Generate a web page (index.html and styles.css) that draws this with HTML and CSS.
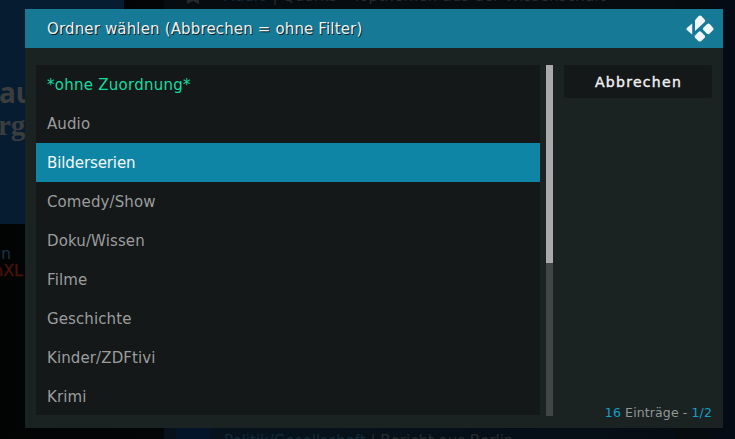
FILE: index.html
```html
<!DOCTYPE html>
<html lang="de">
<head>
<meta charset="utf-8">
<title>Ordner wählen</title>
<link rel="stylesheet" href="styles.css">
</head>
<body>
<div class="backdrop">
  <div class="poster"><div class="poster-sans">au</div><div class="poster-serif">rg</div></div>
  <div class="caption"><div class="caption-top">n</div><div class="caption-bottom">nXL</div></div>
  <div class="strip strip-top">
    <svg class="bookmark" width="14" height="12" viewBox="0 0 14 12"><path d="M1 0h12v12l-6-3-6 3z" fill="#25292b"/></svg>
    <div class="entry entry-top"><span class="topic">Audio</span> | Quarks - Topthemen aus der Wissenschaft</div>
  </div>
  <div class="strip strip-bottom">
    <div class="entry entry-bottom"><span class="topic">Politik/Gesellschaft</span> | Bericht aus Berlin</div>
  </div>
</div>
<main class="dialog">
  <header class="titlebar">
    <h1>Ordner wählen (Abbrechen = ohne Filter)</h1>
    <svg class="logo" width="28" height="28" viewBox="0 0 28 28" fill="#f0f6fa">
      <path d="M9 5.3 12.6 1.1Q14 .1 15.4 1.1L19 4.9Q19.6 6 18.7 7L9 15.9z"/>
      <path d="M6.2 8.6v10.8L.8 14.9Q0 14 .8 13z"/>
      <path d="m17.3 12.8 3.8-3.8q1.4-.8 2.6 0l3.5 3.9q.8 1.1 0 2.2l-3.8 3.7q-1.2.8-2.4 0l-3.7-3.8q-.8-1.1 0-2.2z"/>
      <path d="m9 20.5 3.6-3.8q1.2-.8 2.4 0l3.7 3.8q.8 1.1 0 2.2l-3.7 3.5q-1.2.8-2.4 0l-3.6-3.5q-.8-1.1 0-2.2z"/>
    </svg>
  </header>
  <div class="content">
    <ul class="list">
      <li class="special">*ohne Zuordnung*</li>
      <li>Audio</li>
      <li class="selected">Bilderserien</li>
      <li>Comedy/Show</li>
      <li>Doku/Wissen</li>
      <li>Filme</li>
      <li>Geschichte</li>
      <li>Kinder/ZDFtivi</li>
      <li>Krimi</li>
    </ul>
    <div class="scrollbar"><div class="thumb"></div></div>
    <aside class="side">
      <button class="cancel">Abbrechen</button>
      <p class="count"><b>16</b> Einträge - <b>1/2</b></p>
    </aside>
  </div>
</main>
</body>
</html>
```
FILE: styles.css
```css
* { box-sizing: border-box; }
body {
  margin: 0;
  width: 735px;
  height: 439px;
  overflow: hidden;
  position: relative;
  background: linear-gradient(90deg, #020303 0, #040507 160px, #050b10 300px, #070b0e 690px, #040b15 735px);
  font-family: "DejaVu Sans", sans-serif;
  font-size: 15px;
}
.backdrop { position: absolute; inset: 0; overflow: hidden; }
.poster {
  position: absolute; left: 0; top: 0; width: 124px; height: 224px;
  background: #061c31; color: #3b3d3e; padding-top: 75px;
}
.poster-sans { font: bold 28px/34px "Noto Sans", sans-serif; margin-left: -1px; }
.poster-serif { font: bold 29px/32px "Liberation Serif", serif; margin-left: -2px; }
.caption { position: absolute; left: 0; top: 245px; font-size: 16px; line-height: 17px; }
.caption-top { color: #183345; margin-left: 1px; }
.caption-bottom { color: #471409; margin-left: -7px; -webkit-text-stroke: .4px #471409; }
.strip { position: absolute; left: 164px; width: 512px; background: #060c10; }
.strip-top { top: 0; height: 9px; }
.strip-bottom { top: 428px; height: 11px; background: linear-gradient(90deg, #07101b 0 12px, #04152a 12px 46px, #07131c 46px 80px, #050c14 100%); }
.bookmark { position: absolute; left: 22px; top: -8px; }
.entry { position: absolute; left: 60px; white-space: pre; line-height: 18px; color: #282c2f; }
.entry-top { top: -13px; letter-spacing: .18px; }
.entry-bottom { top: 4px; }
.topic { color: #132a39; }
.dialog {
  position: relative;
  margin: 9px 0 0 25px;
  width: 698px;
  height: 419px;
  background: #1b2222;
}
.titlebar {
  height: 39px;
  padding: 0 9px 0 22px;
  background: #167a97;
  display: flex;
  align-items: center;
  justify-content: space-between;
}
h1 {
  margin: 0;
  font-size: 15px;
  font-weight: 400;
  line-height: 39px;
  padding-top: 1px;
  letter-spacing: .15px;
  color: #f0f0f0;
  text-shadow: 1px 1px 0 #091d23;
}
.logo { display: block; margin-top: 1px; }
.content { display: flex; height: 380px; padding: 17px 11px 0; }
.list {
  list-style: none;
  margin: 0;
  padding: 0;
  width: 504px;
  height: 350px;
  overflow: hidden;
  border-radius: 2px;
  background: #141819;
  color: #9b9d9d;
  letter-spacing: .11px;
}
.list li { height: 39px; line-height: 39px; padding: 1px 0 0 11px; }
.list .special { color: #14dca0; letter-spacing: .26px; }
.list .selected { background: #0f85a5; color: #f4f8f9; letter-spacing: -.1px; }
.scrollbar { width: 7px; height: 351px; margin-left: 6px; background: #404546; }
.thumb { height: 198px; background: #aaa; }
.side {
  width: 148px;
  height: 363px;
  margin-left: 11px;
  display: flex;
  flex-direction: column;
  justify-content: space-between;
}
.cancel {
  height: 33px;
  padding: 2px 0 0 1px;
  border: 0;
  border-radius: 2px;
  background: #141819;
  color: #f0f0f0;
  font: 14px/31px "DejaVu Sans", sans-serif;
  letter-spacing: 1.3px;
  -webkit-text-stroke: .4px #f0f0f0;
}
.count {
  margin: 0 0 7px;
  font-size: 12.5px;
  letter-spacing: .12px;
  line-height: 16px;
  text-align: right;
  white-space: nowrap;
  color: #929696;
}
.count b { color: #149fc6; font-weight: 400; }
```
